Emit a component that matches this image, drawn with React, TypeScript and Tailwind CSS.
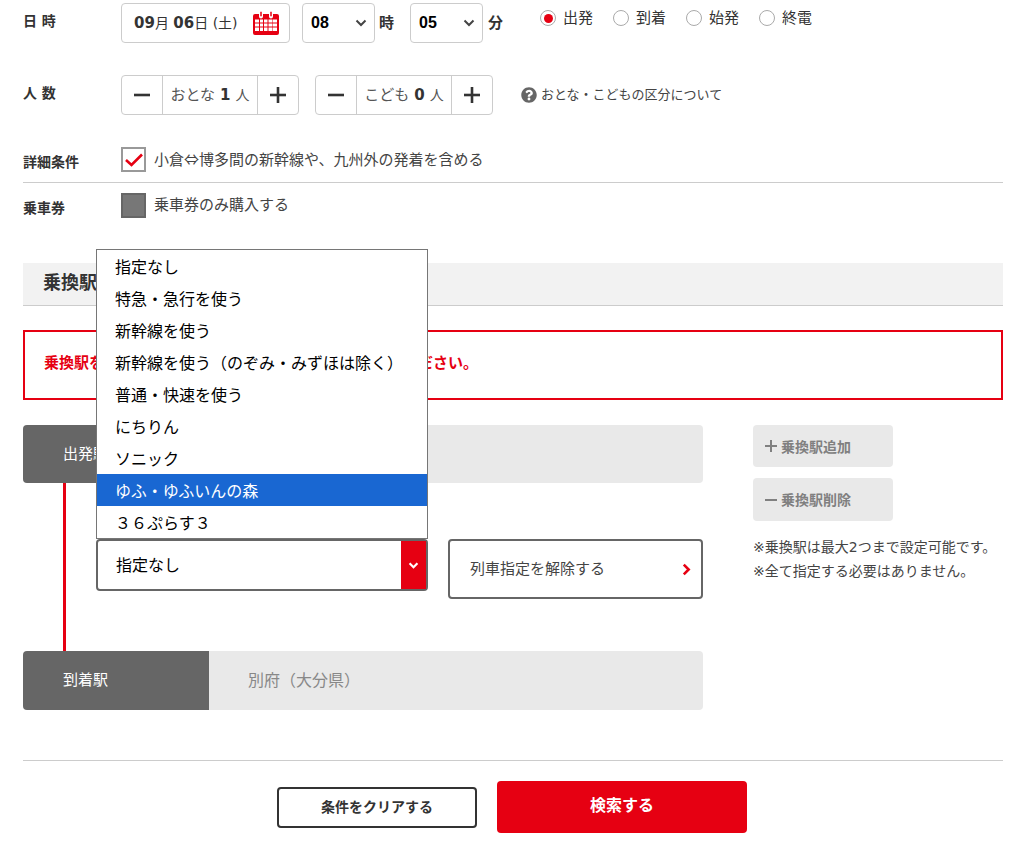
import React from "react";
import { FaQuestionCircle } from "react-icons/fa";

const Chevron = ({ className, w = 3 }: { className: string; w?: number }) => (
  <svg viewBox="0 0 12 8" className={className} fill="none" stroke="currentColor" strokeWidth={w}>
    <path d="M1.5 1.5 6 6l4.5-4.5" />
  </svg>
);

const Calendar = () => (
  <svg viewBox="0 0 26 24" className="h-6 w-[26px] text-[#e60012]">
    <path fill="currentColor" d="M2 3h4v2.5a2 2 0 0 0 4 0V3h6v2.5a2 2 0 0 0 4 0V3h4a2 2 0 0 1 2 2v17a2 2 0 0 1-2 2H2a2 2 0 0 1-2-2V5a2 2 0 0 1 2-2z" />
    <path fill="none" stroke="currentColor" strokeWidth="1.5" d="M8 .8v4.5M18 .8v4.5" />
    <path fill="#fff" d="M2 8.5h4v3H2zM7 8.5h3v3H7zM11 8.5h3.5v3H11zM15.5 8.5h3.500v3h-3.500zM19.500 8.500H24v3h-4.500zM2 12.500h4v3H2zM7 12.500h3v3H7zM11 12.500h3.500v3H11zM15.500 12.500h3.500v3h-3.500zM19.500 12.500H24v3h-4.500zM2 16.500h4V20H2zM7 16.500h3V20H7zM11 16.500h3.500V20H11zM15.500 16.500h3.500V20h-3.500zM19.500 16.500H24V20h-4.500z" />
  </svg>
);

const PlusMinus = ({ plus }: { plus?: boolean }) => (
  <svg viewBox="0 0 16 16" className="h-4 w-4 text-[#333]">
    <path d="M0 8h16" stroke="currentColor" strokeWidth="2.6" />
    {plus && <path d="M8 0v16" stroke="currentColor" strokeWidth="2.6" />}
  </svg>
);

const SmallSelect = ({ value }: { value: string }) => (
  <div className="flex h-10 w-[73px] items-center justify-between rounded border border-[#ccc] pl-2 pr-[7px] font-['Liberation_Sans','Noto_Sans_CJK_JP',sans-serif] text-[16px] font-bold text-black">
    <span>{value}</span>
    <Chevron className="h-[8px] w-[12px] text-[#444]" w={2} />
  </div>
);

const Radio = ({ label, on }: { label: string; on?: boolean }) => (
  <div className="flex w-[73px] items-center gap-[7px] text-[15px] text-[#333]">
    <span className="flex h-4 w-4 items-center justify-center rounded-full border border-[#aaa]">
      {on && <span className="h-[9px] w-[9px] rounded-full bg-[#e60012]" />}
    </span>
    <span>{label}</span>
  </div>
);

const Counter = ({ label, n }: { label: string; n: string }) => (
  <div className="flex h-10 w-[178px] items-stretch rounded border border-[#ccc] text-[15px] text-[#555]">
    <div className="flex w-[40px] items-center justify-center">
      <PlusMinus />
    </div>
    <div className="flex w-[96px] items-center justify-center gap-[5px] border-x border-[#ccc]">
      <span>{label}</span>
      <span className="text-[15px] font-bold text-[#333]">{n}</span>
      <span className="text-[14px]">人</span>
    </div>
    <div className="flex flex-1 items-center justify-center">
      <PlusMinus plus />
    </div>
  </div>
);

const options = [
  "指定なし",
  "特急・急行を使う",
  "新幹線を使う",
  "新幹線を使う（のぞみ・みずほは除く）",
  "普通・快速を使う",
  "にちりん",
  "ソニック",
  "ゆふ・ゆふいんの森",
  "３６ぷらす３",
];

export default function App() {
  return (
    <div className="relative h-[844px] overflow-hidden bg-white pl-[23px] pr-[13px] pt-[3px] font-['DejaVu_Sans','Noto_Sans_CJK_JP',sans-serif] text-[#333]">
      {/* 日時 */}
      <div className="flex h-10 items-center">
        <div className="w-[98px] pb-[3px] text-[14px] font-bold">日 時</div>
        <div className="flex h-10 w-[169px] items-center justify-between rounded border border-[#ccc] pl-3 pr-[10px] text-[14px]">
          <span>
            <b className="text-[15px]">09</b>月 <b className="text-[15px]">06</b>日 (土)
          </span>
          <Calendar />
        </div>
        <div className="ml-3">
          <SmallSelect value="08" />
        </div>
        <span className="ml-1 w-[31px] text-[15px] font-bold">時</span>
        <SmallSelect value="05" />
        <span className="ml-[5px] w-[52px] text-[15px] font-bold">分</span>
        <div className="flex pb-[10px]">
          <Radio label="出発" on />
          <Radio label="到着" />
          <Radio label="始発" />
          <Radio label="終電" />
        </div>
      </div>

      {/* 人数 */}
      <div className="mt-8 flex h-10 items-center">
        <div className="w-[98px] pb-[3px] text-[14px] font-bold">人 数</div>
        <Counter label="おとな" n="1" />
        <div className="ml-4">
          <Counter label="こども" n="0" />
        </div>
        <div className="ml-7 flex items-center gap-1 text-[13px] text-[#444]">
          <FaQuestionCircle className="h-4 w-4 text-[#666]" />
          <span>おとな・こどもの区分について</span>
        </div>
      </div>

      {/* 詳細条件 */}
      <div className="mt-8 flex h-[36px] items-start border-b border-[#ccc]">
        <div className="w-[98px] pt-[5px] text-[14px] font-bold">詳細条件</div>
        <div className="flex h-[25px] w-[25px] items-center justify-center border-2 border-[#999] bg-white">
          <svg viewBox="0 0 18 14" className="h-[14px] w-[18px] text-[#e60012]" fill="none" stroke="currentColor" strokeWidth="2.6">
            <path d="M1 7l5.500 5L17 1.500" />
          </svg>
        </div>
        <span className="ml-2 pt-px text-[15px] leading-[22px] text-[#444]">
          小倉<span className="font-['Noto_Sans_CJK_JP',sans-serif]">⇔</span>博多間の新幹線や、九州外の発着を含める
        </span>
      </div>

      {/* 乗車券 */}
      <div className="mt-[10px] flex h-[25px] items-start">
        <div className="w-[98px] pt-[5px] text-[14px] font-bold">乗車券</div>
        <div className="h-[25px] w-[25px] border-2 border-[#666] bg-[#777]" />
        <span className="ml-2 pt-px text-[15px] leading-[22px] text-[#444]">乗車券のみ購入する</span>
      </div>

      {/* 見出し */}
      <div className="mt-[45px] flex h-[43px] items-center border-b border-[#ccc] bg-[#f2f2f2] pb-[3px] pl-5 text-[18px] font-bold">
        乗換駅設定
      </div>

      {/* エラー */}
      <div className="mt-6 flex h-[70px] items-center border-2 border-[#e60012] pb-[3px] pl-[19px] text-[15px] font-bold text-[#e60012]">
        乗換駅を設定する場合は、駅名と利用列車を指定してください。
      </div>

      {/* 経路 */}
      <div className="mt-[25px] flex">
        <div className="w-[680px]">
          <div className="flex h-[58px] overflow-hidden rounded-sm">
            <div className="flex w-[186px] items-center bg-[#666] pl-10 text-[15px] text-white">出発駅</div>
            <div className="flex-1 bg-[#e9e9e9]" />
          </div>

          <div className="ml-10 flex h-[168px] items-start gap-5 border-l-[3px] border-[#e60012] pl-[30px] pt-14">
            <div className="relative h-[52px] w-[332px]">
              <div className="absolute bottom-full left-0 w-[332px] border border-[#767676] bg-white text-[16px] leading-[36px] text-black">
                {options.map((o, i) => (
                  <div key={o} className={i === 7 ? "h-8 bg-[#1967d2] pl-[18px] text-white" : "h-8 pl-[18px]"}>
                    {o}
                  </div>
                ))}
              </div>
              <div className="flex h-[52px] w-[332px] items-stretch rounded-sm border-2 border-[#666] bg-white text-[16px] text-black">
                <div className="flex flex-1 items-center pl-[18px] pt-[2px]">指定なし</div>
                <div className="flex w-[25px] items-center justify-center bg-[#e60012] text-white">
                  <Chevron className="h-[7px] w-[11px]" w={2.500} />
                </div>
              </div>
            </div>
            <div className="flex h-[60px] w-[255px] items-center justify-between rounded-sm border-2 border-[#666] bg-white pl-5 pr-[10px] text-[15px] text-[#444]">
              <span>列車指定を解除する</span>
              <svg viewBox="0 0 8 12" className="h-[13px] w-[9px] text-[#e60012]" fill="none" stroke="currentColor" strokeWidth="2.400">
                <path d="M1.500 1.500 6 6l-4.500 4.500" />
              </svg>
            </div>
          </div>

          <div className="flex h-[59px] overflow-hidden rounded-sm">
            <div className="flex w-[186px] items-center bg-[#666] pl-10 text-[15px] text-white">到着駅</div>
            <div className="flex flex-1 items-center bg-[#e9e9e9] pl-[39px] text-[16px] text-[#888]">別府（大分県）</div>
          </div>
        </div>

        <div className="ml-[50px] w-[250px]">
          <div className="flex h-[42px] w-[140px] items-center gap-1 rounded-sm bg-[#e9e9e9] pl-3 text-[14px] font-bold text-[#808080]">
            <svg viewBox="0 0 12 12" className="h-3 w-3"><path d="M0 6h12M6 0v12" stroke="currentColor" strokeWidth="2" /></svg>
            <span className="pt-[2px]">乗換駅追加</span>
          </div>
          <div className="mt-[11px] flex h-[43px] w-[140px] items-center gap-1 rounded-sm bg-[#e9e9e9] pl-3 text-[14px] font-bold text-[#808080]">
            <svg viewBox="0 0 12 12" className="h-3 w-3"><path d="M0 6h12" stroke="currentColor" strokeWidth="2" /></svg>
            <span className="pt-[2px]">乗換駅削除</span>
          </div>
          <div className="mt-[14px] text-[14px] leading-6 text-[#444]">
            <p>※乗換駅は最大2つまで設定可能です。</p>
            <p>※全て指定する必要はありません。</p>
          </div>
        </div>
      </div>

      {/* 下部 */}
      <div className="mt-[50px] border-t border-[#ccc] pt-5">
        <div className="flex items-center justify-center gap-5 pr-[2px]">
          <div className="flex h-[41px] w-[200px] items-center justify-center rounded border-2 border-[#333] bg-white text-[14px] font-bold">
            条件をクリアする
          </div>
          <div className="flex h-[52px] w-[250px] items-center justify-center rounded bg-[#e60012] pb-[2px] text-[16px] font-bold text-white">
            検索する
          </div>
        </div>
      </div>
    </div>
  );
}
